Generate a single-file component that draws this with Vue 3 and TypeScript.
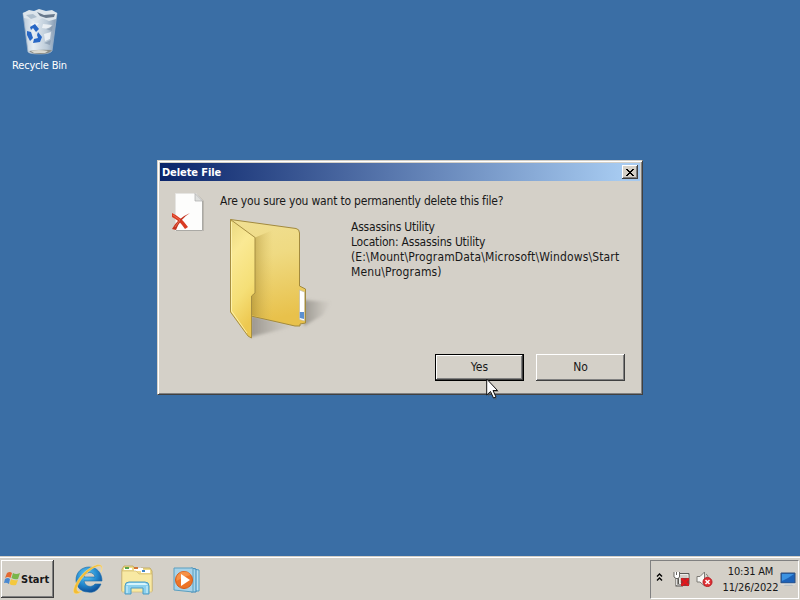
<script setup lang="ts">
interface DialogButton {
  label: string
  isDefault: boolean
}

interface DetailLine {
  text: string
  isPath: boolean
}

const buttons: DialogButton[] = [
  { label: 'Yes', isDefault: true },
  { label: 'No', isDefault: false },
]

const details: DetailLine[] = [
  { text: 'Assassins Utility', isPath: false },
  { text: 'Location: Assassins Utility', isPath: false },
  { text: '(E:\\Mount\\ProgramData\\Microsoft\\Windows\\Start', isPath: true },
  { text: 'Menu\\Programs)', isPath: true },
]
</script>

<template>
  <div class="screen">
    <main class="desktop">
      <div class="shortcut">
        <svg class="bin" width="40" height="50" viewBox="0 0 40 50">
          <defs>
            <linearGradient id="binBody" x1="0" x2="1">
              <stop offset="0" stop-color="#b9c9d8" />
              <stop offset=".3" stop-color="#e6edf3" />
              <stop offset=".7" stop-color="#bccbd9" />
              <stop offset="1" stop-color="#7d94ae" />
            </linearGradient>
          </defs>
          <path d="M3 6 37 6 32 44Q30 47 20 47 10 47 8 45Z" fill="url(#binBody)" stroke="#9db3c9" stroke-width=".8" />
          <path d="M3 6 9 3 14 4 19 2 26 4 32 3 37 6 36 12 29 14 22 11 16 15 9 12 4 11Z" fill="#dce5ec" />
          <path d="M17 5 24 8 35 7 34 10 26 11 20 9Z" fill="#68798c" />
          <path d="M6 8 13 7 17 10 11 12Z" fill="#aebfce" />
          <path d="M23 17 32 18 29 22 22 21ZM24 27 31 25 30 32 25 34ZM10 17 19 16 15 21Z" fill="#f5f8fa" opacity=".8" />
          <path d="M26 22 33 19 32 24ZM24 36 31 33 30 38Z" fill="#8497ac" opacity=".7" />
          <path d="m10 20 5-3 4 5-3 3-3-4-2 2zM7 24l4 1 2 6-3 3-3-6zM18 25l4 5-2 5-7 1 1-4 4-1-1-3z" fill="#2867c5" />
          <path d="M9 44Q19 42 32 43 30 47 20 47 11 47 9 44Z" fill="#8a8c86" />
          <path d="M11 44Q18 42 28 44L25 46H14Z" fill="#d9d8cf" />
        </svg>
        <span class="shortcut-label">Recycle Bin</span>
      </div>

      <section class="dialog" role="dialog">
        <header class="titlebar">
          <span class="title">Delete File</span>
          <button class="close" aria-label="Close">
            <svg width="8" height="7" viewBox="0 0 8 7" shape-rendering="crispEdges">
              <path d="M0 0h2v1h1v1h2V1h1V0h2v1H7v1H6v1H5v1h1v1h1v1h1v1H6V6H5V5H3v1H2v1H0V6h1V5h1V4h1V3H2V2H1V1H0z" />
            </svg>
          </button>
        </header>

        <div class="body">
          <svg class="doc" width="36" height="40" viewBox="0 0 36 40">
            <path d="M5 1H26L33 8V38H5Z" fill="#aaa79f" opacity=".6" />
            <path d="M4.500.5H25L31.500 8V37.500H4.500Z" fill="#fdfdfc" stroke="#e6e5e2" />
            <path d="M31.500 8V37.500H5" fill="none" stroke="#aaa9a5" />
            <path d="M24 .500V8H31.500Z" fill="#dedfdd" stroke="#aaa" stroke-width=".7" />
            <path d="M1 20Q10 24 17 34L14 36Q8 27 1 24Z" fill="#d93b22" />
            <path d="M19 20Q9 26 5 37L1 36Q7 25 19 20Z" fill="#c53420" />
            <path d="M2 22 9 27 4 34" fill="none" stroke="#f0785b" stroke-width=".8" />
          </svg>

          <div class="content">
            <p class="question">Are you sure you want to permanently delete this file?</p>
            <div class="item">
              <svg class="folder" width="110" height="124" viewBox="0 0 110 124">
                <defs>
                  <linearGradient id="back" x1="0" y1="0" x2=".15" y2="1">
                    <stop offset="0" stop-color="#f0df93" />
                    <stop offset=".4" stop-color="#efda82" />
                    <stop offset="1" stop-color="#e8c14b" />
                  </linearGradient>
                  <linearGradient id="front" x1="0" y1="0" x2=".25" y2="1">
                    <stop offset="0" stop-color="#ead880" />
                    <stop offset=".3" stop-color="#fae994" />
                    <stop offset=".7" stop-color="#f5df77" />
                    <stop offset="1" stop-color="#edc850" />
                  </linearGradient>
                  <linearGradient id="fold" x1="0" x2="1">
                    <stop offset="0" stop-color="#a68a32" stop-opacity=".65" />
                    <stop offset="1" stop-color="#d7ba5a" stop-opacity="0" />
                  </linearGradient>
                  <linearGradient id="shade" x1="0" x2="1">
                    <stop offset="0" stop-color="#77736d" stop-opacity=".65" />
                    <stop offset="1" stop-color="#96928b" stop-opacity="0" />
                  </linearGradient>
                  <filter id="soft"><feGaussianBlur stdDeviation="1.5" /></filter>
                </defs>
                <path d="M78 82 106 84 98 97 79 108Z" fill="url(#shade)" filter="url(#soft)" />
                <path d="M26 97 70 108 55 112 25 119Z" fill="url(#shade)" filter="url(#soft)" />
                <path d="M5.500 1.500 71 10.500Q74.500 11 74.500 15V68L80.500 71V105L75 106V108L70 108 26 98Z" fill="url(#back)" stroke="#a28a3e" stroke-width="1" />
                <path d="M29 20 48 12V102L26 97Z" fill="url(#fold)" />
                <path d="M74.500 72 79.500 74V103L74.500 101.500Z" fill="#fff" stroke="#bbb69f" stroke-width=".6" />
                <path d="M74.800 94H79V101L74.800 100Z" fill="#5a8fd1" />
                <path d="M5.500 1.500 30 19.500V75L26.500 78V120L23 118 5.500 94Z" fill="url(#front)" stroke="#a78f42" />
                <path d="M6.500 4V93L22 115" fill="none" stroke="#fff6b8" opacity=".8" />
              </svg>
              <div class="details">
                <p v-for="line in details" :key="line.text" :class="{ path: line.isPath }">{{ line.text }}</p>
              </div>
            </div>
          </div>
        </div>

        <footer class="actions">
          <button v-for="b in buttons" :key="b.label" class="btn" :class="{ 'is-default': b.isDefault }">
            <span>{{ b.label }}</span>
          </button>
        </footer>
      </section>
    </main>

    <footer class="taskbar">
      <button class="start">
        <svg width="17" height="16" viewBox="0 0 17 16">
          <path d="M3 2Q6 0 8 2L6.500 7Q4 5 1 7Z" fill="#e36a32" />
          <path d="M9 2Q12 4 16 2L14 8Q11 9 7.500 7Z" fill="#79b64a" />
          <path d="M1 8Q4 6 6 8L5 13Q2 11 0 12Z" fill="#4a89d0" />
          <path d="M7 8Q10 10 14 9L12 14Q8 15 5.500 13Z" fill="#f4c83d" />
        </svg>
        <span>Start</span>
      </button>

      <nav class="pinned">
        <svg class="ie" width="32" height="32" viewBox="0 0 32 32">
          <defs>
            <radialGradient id="blue" cx=".4" cy=".3" r=".75">
              <stop offset="0" stop-color="#65cbf4" />
              <stop offset=".55" stop-color="#2489ce" />
              <stop offset="1" stop-color="#0b4690" />
            </radialGradient>
          </defs>
          <path fill-rule="evenodd" d="M17 3C25 3 30 9 30 17H12C13 23 20 24 23 20H29C26 27 21 29 16 28 8 28 4 22 4 16 4 8 10 3 17 3ZM12 13H23C22 7 13 7 12 13Z" fill="url(#blue)" stroke="#176aa9" stroke-width=".6" />
          <path d="M29 8C32 1 28-1 22 2 12 6 4 17 2 24 0 30 4 32 10 27 5 29 3 26 7 19 12 10 21 3 27 2 30 2 30 5 29 8Z" fill="#f3bd35" stroke="#ffe18b" stroke-width=".5" />
        </svg>
        <svg class="explorer" width="34" height="32" viewBox="0 0 34 32">
          <path d="M2 5 4 2H13L15 5H20L21 4H30L32 7V27H2Z" fill="#efdc8c" stroke="#bda252" stroke-width=".8" />
          <path d="M4 4H12V6H4Z" fill="#fff" /><path d="M5 3H9V5H5Z" fill="#59a449" />
          <path d="M14 4H23V7H14Z" fill="#fff" /><path d="M14 3H18V5H14Z" fill="#d37333" />
          <path d="M21 6H30V9H21Z" fill="#fff" /><path d="M22 6H25V8H22Z" fill="#4187c8" />
          <path d="M2 7H16L19 10H32V28H2Z" fill="#f8e9a3" stroke="#ccb66e" stroke-width=".6" />
          <path d="M5 30V22Q5 18 9 18H25Q29 18 29 22V30H23V24H11V30Z" fill="#8bd0ed" stroke="#4b9bc4" />
          <path d="M6 21Q7 19 10 19H25L28 21Z" fill="#d6f4fc" />
          <path d="M7 22V29M27 22V29" stroke="#d9f4fc" />
        </svg>
        <svg class="player" width="30" height="28" viewBox="0 0 30 28">
          <path d="M20 3 26 4V25H20Z" fill="#bee1f1" stroke="#4e9dc6" />
          <path d="M18 2 23 3V26H18Z" fill="#a7d5ea" stroke="#3886b8" />
          <path d="M1 2H20V26L1 24Z" fill="#a7d2e8" stroke="#5a9fc0" />
          <circle cx="11" cy="14" r="8.500" fill="#ed7427" stroke="#d65b17" />
          <path d="M3.500 12A8 8 0 0 1 18 9Q12 10 3.500 15Z" fill="#fba15b" opacity=".65" />
          <path d="M8 8 17 14 8 20Z" fill="#fff" />
        </svg>
      </nav>

      <aside class="tray">
        <svg class="chevrons" width="7" height="9" viewBox="0 0 7 9">
          <path d="M1 3.500 3.500 1 6 3.500M1 7.500 3.500 5 6 7.500" fill="none" stroke="#000" stroke-width="1.400" />
        </svg>
        <svg class="network" width="17" height="17" viewBox="0 0 17 17">
          <path d="M5.500 2.500H16V13.500H5.500Z" fill="#a5a39e" stroke="#595854" />
          <path d="M6.500 3.500H15V12.500H6.500Z" fill="#d0cec8" stroke="#eeede9" />
          <path d="M3.500 7V14.500H10" fill="none" stroke="#55534f" stroke-width="2" />
          <path d="M3.500 7V14H10" fill="none" stroke="#fff" stroke-width=".8" />
          <path d="M1 1V6L3 7.500H5L6.500 6V1M3.500 1V4" fill="#fff" stroke="#66645f" />
          <path d="M8 7H16V15H8Z" fill="#9c3034" />
          <path d="m8.500 7.500 7 7m0-7-7 7" stroke="#e3171c" stroke-width="2.200" />
        </svg>
        <svg class="sound" width="17" height="17" viewBox="0 0 17 17">
          <path d="M1 5.500H4L8.500 1V15L4 11H1Z" fill="#f8f8f6" stroke="#7c7a75" />
          <path d="M10 3Q12 4 12 6" fill="none" stroke="#817f79" />
          <circle cx="11.500" cy="11" r="4.500" fill="#df3034" stroke="#b91c22" />
          <path d="m9.500 9 4 4m0-4-4 4" stroke="#fff" stroke-width="1.500" />
        </svg>
        <div class="clock">
          <span class="time">10:31 AM</span>
          <span>11/26/2022</span>
        </div>
        <svg class="show-desktop" width="16" height="15" viewBox="0 0 16 15">
          <path d="M1 1H15V11H1Z" fill="#1d62b8" stroke="#31507c" />
          <path d="M2 2H14L8 6 2 9Z" fill="#3c93e2" />
          <path d="M5 12H12L13 14H4Z" fill="#b8c0c5" />
          <path d="M1 12H15" stroke="#e6eaec" />
        </svg>
      </aside>
    </footer>

    <svg class="cursor" width="14" height="23" viewBox="0 0 14 23">
      <path d="M2 3V19L6 15 9 22 11 21 8 14H13Z" fill="#555" opacity=".45" />
      <path d="M.700 1V17L4.500 13.500 7.500 20 10 19 7 12.500H11.500Z" fill="#fff" stroke="#111" stroke-width="1" />
    </svg>
  </div>
</template>

<style>
body {
  overflow: hidden;
}
</style>

<style scoped>
* {
  box-sizing: border-box;
}
.screen {
  position: relative;
  display: flex;
  flex-direction: column;
  width: 800px;
  height: 600px;
  overflow: hidden;
  background: #3a6ea5;
  color: #181818;
  font: 12px/15px 'DejaVu Sans Condensed', 'DejaVu Sans', sans-serif;
  font-stretch: condensed;
}
svg {
  display: block;
  flex: none;
}
p {
  margin: 0;
  white-space: nowrap;
}
button {
  padding: 0;
  border: 0;
  border-radius: 0;
  color: inherit;
  font: inherit;
}
.desktop {
  flex: 1;
  padding: 7px 2px;
}
.shortcut {
  display: flex;
  flex-direction: column;
  align-items: center;
  width: 75px;
}
.shortcut-label {
  padding-top: 1px;
  color: #fff;
  font-size: 11px;
  line-height: 15px;
  letter-spacing: -0.2px;
  white-space: nowrap;
}
.dialog {
  position: absolute;
  left: 157px;
  top: 160px;
  display: flex;
  flex-direction: column;
  width: 486px;
  height: 235px;
  padding: 2px;
  background: #d4d0c8;
  border: 1px solid;
  border-color: #d4d0c8 #404040 #404040 #d4d0c8;
  box-shadow: inset 1px 1px #fff, inset -1px -1px #808080;
}
.titlebar {
  display: flex;
  align-items: center;
  justify-content: space-between;
  height: 18px;
  padding: 0 2px;
  background: linear-gradient(90deg, #0a246a, #a6caf0 96%);
}
.title {
  color: #fff;
  font-size: 11px;
  font-weight: bold;
  letter-spacing: -0.1px;
}
.close {
  display: grid;
  place-items: center;
  width: 16px;
  height: 14px;
  background: #d4d0c8;
  box-shadow: inset -1px -1px #404040, inset 1px 1px #fff, inset -2px -2px #808080;
}
.body {
  display: flex;
  flex: 1;
  gap: 13px;
  padding: 12px 8px 0 11px;
}
.content {
  flex: 1;
  padding-top: 1px;
}
.question {
  letter-spacing: -0.2px;
}
.item {
  display: flex;
  gap: 16px;
  margin-top: 9px;
  padding-left: 5px;
}
.details {
  padding-top: 2px;
  letter-spacing: -0.21px;
}
.path {
  letter-spacing: 0.15px;
}
.actions {
  display: flex;
  justify-content: flex-end;
  gap: 12px;
  padding: 0 15px 11px 0;
}
.btn {
  width: 89px;
  height: 27px;
  background: #d4d0c8;
  box-shadow: inset -1px -1px #404040, inset 1px 1px #fff, inset -2px -2px #808080;
}
.is-default {
  border: 1px solid #000;
}
.taskbar {
  display: flex;
  height: 44px;
  padding: 4px 1px 1px;
  background: #d4d0c8;
  box-shadow: inset 0 1px #d4d0c8, inset 0 2px #fff;
}
.start {
  display: flex;
  align-items: center;
  width: 53px;
  height: 38px;
  padding-left: 3px;
  background: #d4d0c8;
  box-shadow: inset -1px -1px #404040, inset 1px 1px #fff, inset -2px -2px #808080;
  font-size: 11px;
  font-weight: bold;
}
.pinned {
  display: flex;
  flex: 1;
  align-items: center;
  gap: 16px;
  padding-left: 18px;
}
.player {
  margin-left: 3px;
}
.tray {
  display: flex;
  align-items: center;
  width: 149px;
  padding-left: 5px;
  border: 1px solid;
  border-color: #808080 #fff #fff #808080;
}
.chevrons {
  margin-bottom: 4px;
}
.network {
  margin-left: 10px;
}
.sound {
  margin-left: 6px;
}
.clock {
  display: flex;
  flex-direction: column;
  align-items: center;
  width: 57px;
  margin-left: 9px;
  font-size: 11px;
  line-height: 16px;
  letter-spacing: -0.1px;
  white-space: nowrap;
}
.time {
  letter-spacing: -0.2px;
}
.show-desktop {
  margin-left: 1px;
}
.cursor {
  position: absolute;
  left: 486px;
  top: 378px;
}
</style>
